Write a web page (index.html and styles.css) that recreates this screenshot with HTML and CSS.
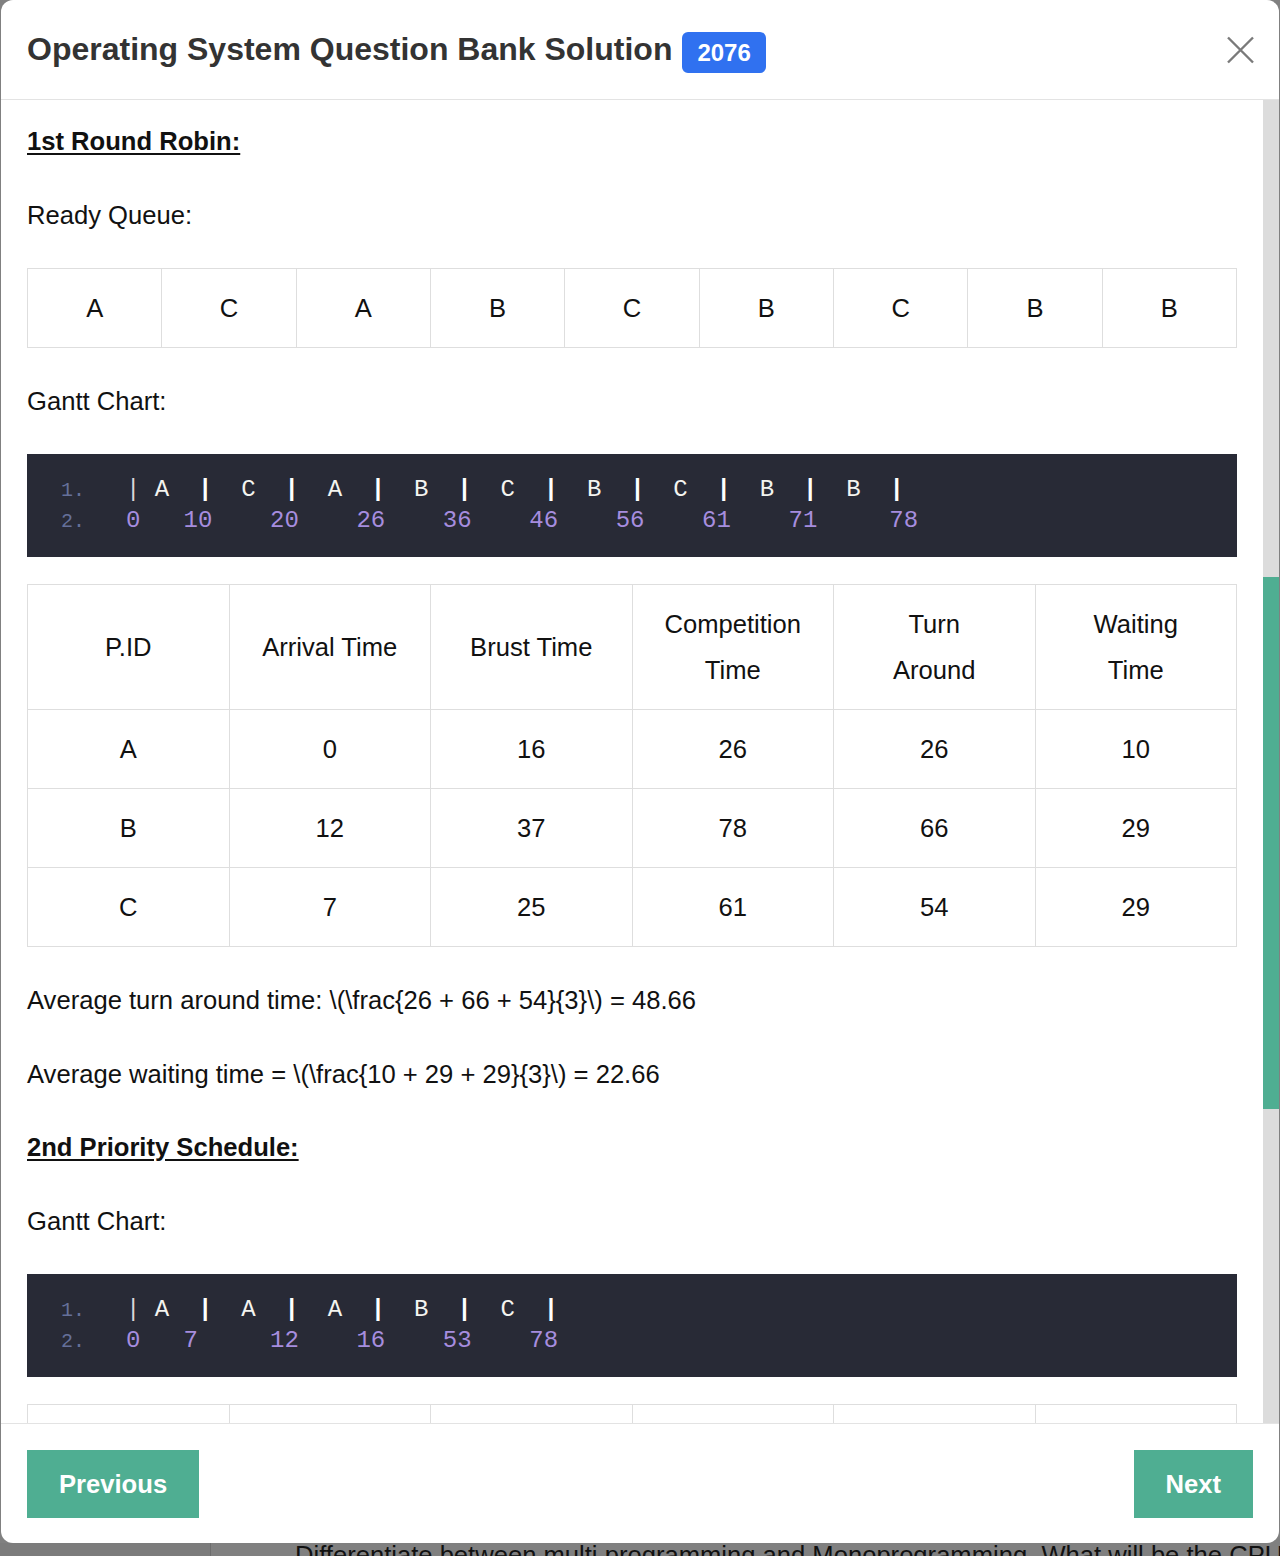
FILE: index.html
```html
<!DOCTYPE html>
<html lang="en">
<head>
<meta charset="utf-8">
<title>Operating System Question Bank Solution</title>
<link rel="stylesheet" href="styles.css">
</head>
<body>
<div class="modal">
  <div class="modal-header">
    <h1 class="title">Operating System Question Bank Solution</h1>
    <span class="badge">2076</span>
    <button class="close" aria-label="Close">
      <svg width="27" height="28" viewBox="0 0 27 28"><path d="M1 1.5L26 26.5M26 1.5L1 26.5" stroke="#7a7a7a" stroke-width="2.4" fill="none"/></svg>
    </button>
  </div>
  <div class="modal-body">
    <div class="content">
      <p class="heading">1st Round Robin:</p>
      <p class="before-block">Ready Queue:</p>
      <table class="queue">
        <tr><td>A</td><td>C</td><td>A</td><td>B</td><td>C</td><td>B</td><td>C</td><td>B</td><td>B</td></tr>
      </table>
      <p class="before-block">Gantt Chart:</p>
      <div class="code">
        <div class="line"><span class="ln">1.</span><span class="src"><span class="pipe">|</span> A  <span class="bar">|</span>  C  <span class="bar">|</span>  A  <span class="bar">|</span>  B  <span class="bar">|</span>  C  <span class="bar">|</span>  B  <span class="bar">|</span>  C  <span class="bar">|</span>  B  <span class="bar">|</span>  B  <span class="bar">|</span></span></div>
        <div class="line"><span class="ln">2.</span><span class="src num">0   10    20    26    36    46    56    61    71     78</span></div>
      </div>
      <table class="data">
        <tr><th>P.ID</th><th>Arrival Time</th><th>Brust Time</th><th>Competition<br>Time</th><th>Turn<br>Around</th><th>Waiting<br>Time</th></tr>
        <tr><td>A</td><td>0</td><td>16</td><td>26</td><td>26</td><td>10</td></tr>
        <tr><td>B</td><td>12</td><td>37</td><td>78</td><td>66</td><td>29</td></tr>
        <tr><td>C</td><td>7</td><td>25</td><td>61</td><td>54</td><td>29</td></tr>
      </table>
      <p>Average turn around time: \(\frac{26 + 66 + 54}{3}\) = 48.66</p>
      <p class="before-heading">Average waiting time = \(\frac{10 + 29 + 29}{3}\) = 22.66</p>
      <p class="heading">2nd Priority Schedule:</p>
      <p class="before-block">Gantt Chart:</p>
      <div class="code">
        <div class="line"><span class="ln">1.</span><span class="src"><span class="pipe">|</span> A  <span class="bar">|</span>  A  <span class="bar">|</span>  A  <span class="bar">|</span>  B  <span class="bar">|</span>  C  <span class="bar">|</span></span></div>
        <div class="line"><span class="ln">2.</span><span class="src num">0   7     12    16    53    78</span></div>
      </div>
      <table class="data">
        <tr><td></td><td></td><td></td><td></td><td></td><td></td></tr>
      </table>
    </div>
    <div class="scrollbar"><div class="thumb"></div></div>
  </div>
  <div class="modal-footer">
    <button class="btn">Previous</button>
    <button class="btn">Next</button>
  </div>
</div>
<div class="behind">
  <div class="behind-side"></div>
  <div class="behind-text">Differentiate between multi programming and Monoprogramming. What will be the CPU</div>
</div>
</body>
</html>
```

FILE: styles.css
```css
* { box-sizing: border-box; }
html, body { margin: 0; padding: 0; }
html { overflow: hidden; }
body {
  background: #808080;
  font-family: "Liberation Sans", Arial, sans-serif;
  color: #111;
}
.modal {
  margin: 0 1px;
  background: #fff;
  border-radius: 12px;
  overflow: hidden;
  display: flex;
  flex-direction: column;
}
.modal-header {
  height: 100px;
  border-bottom: 1px solid #e3e3e3;
  display: flex;
  align-items: center;
  padding: 0 25px 0 26px;
}
.title {
  margin: 0;
  font-size: 32px;
  font-weight: bold;
  color: #333;
}
.badge {
  margin-left: 10px;
  margin-top: 6px;
  background: #3071f0;
  color: #fff;
  font-size: 24px;
  font-weight: bold;
  border-radius: 6px;
  height: 41px;
  line-height: 41px;
  padding: 0 15px;
}
.close {
  margin-left: auto;
  background: none;
  border: 0;
  padding: 0;
  width: 27px;
  height: 28px;
  display: flex;
}
.modal-body {
  display: flex;
  height: 1323px;
}
.content {
  flex: 1;
  overflow: hidden;
  padding: 18px 26px 0;
}
.scrollbar {
  width: 16px;
  flex-shrink: 0;
  background: #dcdcdc;
}
.thumb {
  margin-top: 477px;
  height: 532px;
  background: #4fae92;
}
.content p {
  margin: 0 0 28px;
  font-size: 25.6px;
  line-height: 46px;
}
.content p.before-block { margin-bottom: 30px; }
.content p.before-heading { margin-bottom: 27px; }
.content p.heading {
  font-weight: bold;
  text-decoration: underline;
  text-underline-offset: 3px;
}
table {
  width: 100%;
  border-collapse: collapse;
  table-layout: fixed;
  margin-bottom: 30px;
  font-size: 25.6px;
  line-height: 46px;
  text-align: center;
}
td, th {
  border: 1px solid #dedede;
  padding: 16px 8px;
  font-weight: normal;
  white-space: nowrap;
}
.code {
  background: #282a36;
  margin: 0 0 27px;
  padding: 20px 0 21px 34px;
  font-family: "Liberation Mono", "DejaVu Sans Mono", monospace;
  font-size: 24px;
  line-height: 31px;
  color: #f4f4f0;
}
.line {
  display: flex;
  align-items: baseline;
  height: 31px;
  white-space: pre;
}
.ln {
  width: 65px;
  font-size: 20px;
  color: #65709a;
}
.pipe { color: #d8d8d8; }
.bar { font-weight: bold; color: #fff; }
.num { color: #a68ddf; }
.modal-footer {
  border-top: 1px solid #e3e3e3;
  padding: 26px 26px 25px 26px;
  display: flex;
  justify-content: space-between;
}
.btn {
  background: #4fae92;
  color: #fff;
  font-family: "Liberation Sans", Arial, sans-serif;
  font-weight: bold;
  font-size: 25.6px;
  height: 68px;
  padding: 0 32px;
  border: 0;
}
.behind {
  display: flex;
  height: 13px;
  overflow: hidden;
}
.behind-side {
  width: 211px;
  flex-shrink: 0;
  background: #7c7c7c;
  border-right: 1px solid #6d6d6d;
}
.behind-text {
  padding-left: 84px;
  font-size: 25.6px;
  line-height: 24px;
  color: #111;
  white-space: nowrap;
}
```
